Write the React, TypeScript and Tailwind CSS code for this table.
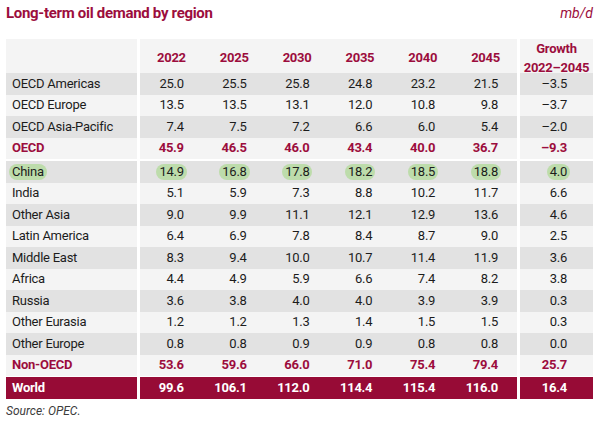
import React from "react";

type Row = {
  label: string;
  values: string[];
  growth: string;
  kind?: "total" | "china" | "world";
};

const years = ["2022", "2025", "2030", "2035", "2040", "2045"];

const rows: Row[] = [
  { label: "OECD Americas", values: ["25.0", "25.5", "25.8", "24.8", "23.2", "21.5"], growth: "–3.5" },
  { label: "OECD Europe", values: ["13.5", "13.5", "13.1", "12.0", "10.8", "9.8"], growth: "–3.7" },
  { label: "OECD Asia-Pacific", values: ["7.4", "7.5", "7.2", "6.6", "6.0", "5.4"], growth: "–2.0" },
  { label: "OECD", values: ["45.9", "46.5", "46.0", "43.4", "40.0", "36.7"], growth: "–9.3", kind: "total" },
  { label: "China", values: ["14.9", "16.8", "17.8", "18.2", "18.5", "18.8"], growth: "4.0", kind: "china" },
  { label: "India", values: ["5.1", "5.9", "7.3", "8.8", "10.2", "11.7"], growth: "6.6" },
  { label: "Other Asia", values: ["9.0", "9.9", "11.1", "12.1", "12.9", "13.6"], growth: "4.6" },
  { label: "Latin America", values: ["6.4", "6.9", "7.8", "8.4", "8.7", "9.0"], growth: "2.5" },
  { label: "Middle East", values: ["8.3", "9.4", "10.0", "10.7", "11.4", "11.9"], growth: "3.6" },
  { label: "Africa", values: ["4.4", "4.9", "5.9", "6.6", "7.4", "8.2"], growth: "3.8" },
  { label: "Russia", values: ["3.6", "3.8", "4.0", "4.0", "3.9", "3.9"], growth: "0.3" },
  { label: "Other Eurasia", values: ["1.2", "1.2", "1.3", "1.4", "1.5", "1.5"], growth: "0.3" },
  { label: "Other Europe", values: ["0.8", "0.8", "0.9", "0.9", "0.8", "0.8"], growth: "0.0" },
  { label: "Non-OECD", values: ["53.6", "59.6", "66.0", "71.0", "75.4", "79.4"], growth: "25.7", kind: "total" },
  { label: "World", values: ["99.6", "106.1", "112.0", "114.4", "115.4", "116.0"], growth: "16.4", kind: "world" },
];

const Cell = ({ children, china }: { children: React.ReactNode; china: boolean }) => (
  <span className={`inline-block px-[3px] leading-[16px] rounded-full ${china ? "bg-[#bddcab]" : ""}`}>
    {children}
  </span>
);

const TableRow = ({ row, idx }: { row: Row; idx: number }) => {
  const bg =
    row.kind === "world" ? "bg-[#970b36]" : idx % 2 === 0 ? "bg-[#e2e2e2]" : "bg-[#f4f4f4]";
  const text =
    row.kind === "world"
      ? "text-white font-bold"
      : row.kind === "total"
      ? "text-[#9c0d3d] font-bold"
      : "text-[#1c1c1c]";
  const china = row.kind === "china";
  // extra white line before China and World
  const gap = row.kind === "china" ? "mt-[2px]" : row.kind === "world" ? "mt-[1px]" : "";

  return (
    <div className={`grid grid-cols-[131px_377px_73px] gap-x-[3px] h-[21.5px] ${gap} ${text}`}>
      <div className={`${bg} flex items-center pl-[3px]`}>
        <Cell china={china}>{row.label}</Cell>
      </div>
      <div className={`${bg} grid grid-cols-6`}>
        {row.values.map((v, i) => (
          <div key={i} className="flex items-center justify-end pr-[16px]">
            <Cell china={china}>{v}</Cell>
          </div>
        ))}
      </div>
      <div className={`${bg} flex items-center justify-end pr-[23px]`}>
        <Cell china={china}>{row.growth}</Cell>
      </div>
    </div>
  );
};

export default function App() {
  return (
    <div className="w-[602px] h-[424px] bg-white px-[6px] pt-[3px] font-['Roboto',sans-serif] text-[13px] tracking-[-0.25px]">
      {/* Titel */}
      <div className="flex items-center justify-between h-[20px] w-[587px]">
        <h1 className="text-[15px] font-bold text-[#9c0d3d] tracking-[-0.3px]">
          Long-term oil demand by region
        </h1>
        <span className="text-[14px] italic text-[#9c0d3d] tracking-normal">mb/d</span>
      </div>

      {/* Kopfzeile */}
      <div className="mt-[16px] grid grid-cols-[131px_377px_73px] gap-x-[3px] h-[33px] font-bold text-[#9c0d3d]">
        <div className="bg-[#f4f4f4]" />
        <div className="bg-[#f4f4f4] grid grid-cols-6">
          {years.map((y) => (
            <div key={y} className="flex items-center justify-center">
              {y}
            </div>
          ))}
        </div>
        <div className="bg-[#f4f4f4] flex flex-col items-center justify-center leading-[19px]">
          <span>Growth</span>
          <span>2022–2045</span>
        </div>
      </div>

      <div className="mt-[1px] flex flex-col">
        {rows.map((r, i) => (
          <TableRow key={r.label} row={r} idx={i} />
        ))}
      </div>

      <p className="mt-[4px] text-[12px] italic text-[#3c3c3c] leading-[16px] tracking-normal">
        Source: OPEC.
      </p>
    </div>
  );
}
